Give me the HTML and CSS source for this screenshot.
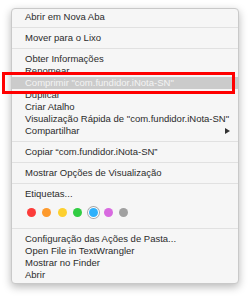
FILE: index.html
```html
<!DOCTYPE html>
<html lang="pt">

<head>
    <meta charset="UTF-8">
    <meta name="viewport" content="width=device-width, initial-scale=1.0">
    <title>Menu de contexto</title>
    <link rel="stylesheet" href="styles.css">
</head>

<body>
    <div class="menu">
        <div class="item">Abrir em Nova Aba</div>
        <div class="sep"></div>
        <div class="item">Mover para o Lixo</div>
        <div class="sep"></div>
        <div class="item">Obter Informações</div>
        <div class="item">Renomear</div>
        <div class="item selected">Comprimir "com.fundidor.iNota-SN"</div>
        <div class="item">Duplicar</div>
        <div class="item">Criar Atalho</div>
        <div class="item">Visualização Rápida de "com.fundidor.iNota-SN"</div>
        <div class="item submenu">Compartilhar <span class="arrow"></span></div>
        <div class="sep"></div>
        <div class="item">Copiar “com.fundidor.iNota-SN”</div>
        <div class="sep"></div>
        <div class="item">Mostrar Opções de Visualização</div>
        <div class="sep"></div>
        <div class="item">Etiquetas...</div>
        <div class="tags">
            <span class="tag red"></span>
            <span class="tag orange"></span>
            <span class="tag yellow"></span>
            <span class="tag green"></span>
            <span class="tag blue active"></span>
            <span class="tag purple"></span>
            <span class="tag gray"></span>
        </div>
        <div class="sep"></div>
        <div class="item">Configuração das Ações de Pasta...</div>
        <div class="item">Open File in TextWrangler</div>
        <div class="item">Mostrar no Finder</div>
        <div class="item">Abrir</div>
    </div>
    <!-- marcação vermelha sobre o item -->
    <div class="mark"></div>
</body>

</html>
```

FILE: styles.css
```css
body {
    margin: 0;
    padding: 0;
    background-color: #fff;
    font-family: "Liberation Sans", Arial, sans-serif;
    width: 250px;
    height: 297px;
    position: relative;
    overflow: hidden;
}

.menu {
    margin: 8px 0 0 11px;
    width: 226px;
    padding: 2px 0;
    background-color: #f6f6f6;
    border: 1px solid #c9c9c9;
    border-radius: 4px;
    box-shadow: 0 3px 8px rgba(0, 0, 0, 0.28);
}

.item {
    height: 12px;
    line-height: 12px;
    padding-left: 13px;
    padding-right: 8px;
    font-size: 9.5px;
    color: #2b2b2b;
    white-space: nowrap;
}

.item.selected {
    background-color: #cbcbcb;
    color: #f4f4f4;
}

.submenu {
    display: flex;
    justify-content: space-between;
    align-items: center;
}

.arrow {
    width: 0;
    height: 0;
    border-top: 3px solid transparent;
    border-bottom: 3px solid transparent;
    border-left: 5px solid #333;
}

.sep {
    height: 9px;
    display: flex;
    align-items: center;
}

.sep:before {
    content: "";
    flex: 1;
    height: 1px;
    background-color: #e1e1e1;
}

.tags {
    display: flex;
    align-items: center;
    gap: 2.4px;
    height: 24px;
    padding-left: 13px;
}

.tag {
    width: 13px;
    height: 13px;
    border-radius: 50%;
    position: relative;
}

.tag:after {
    content: "";
    position: absolute;
    left: 2px;
    top: 2px;
    width: 9px;
    height: 9px;
    border-radius: 50%;
    background-color: var(--c);
}

.tag.active {
    box-shadow: inset 0 0 0 1px #a6a6a6;
    background-color: #fff;
}

.red { --c: #fc3c3a; }
.orange { --c: #fd9a2d; }
.yellow { --c: #fdd02f; }
.green { --c: #31cd43; }
.blue { --c: #2fb1fb; }
.purple { --c: #d86ae0; }
.gray { --c: #a1a1a1; }

.mark {
    position: absolute;
    left: 2px;
    top: 72px;
    width: 227px;
    height: 16px;
    border: 3px solid #ff0000;
}
```
